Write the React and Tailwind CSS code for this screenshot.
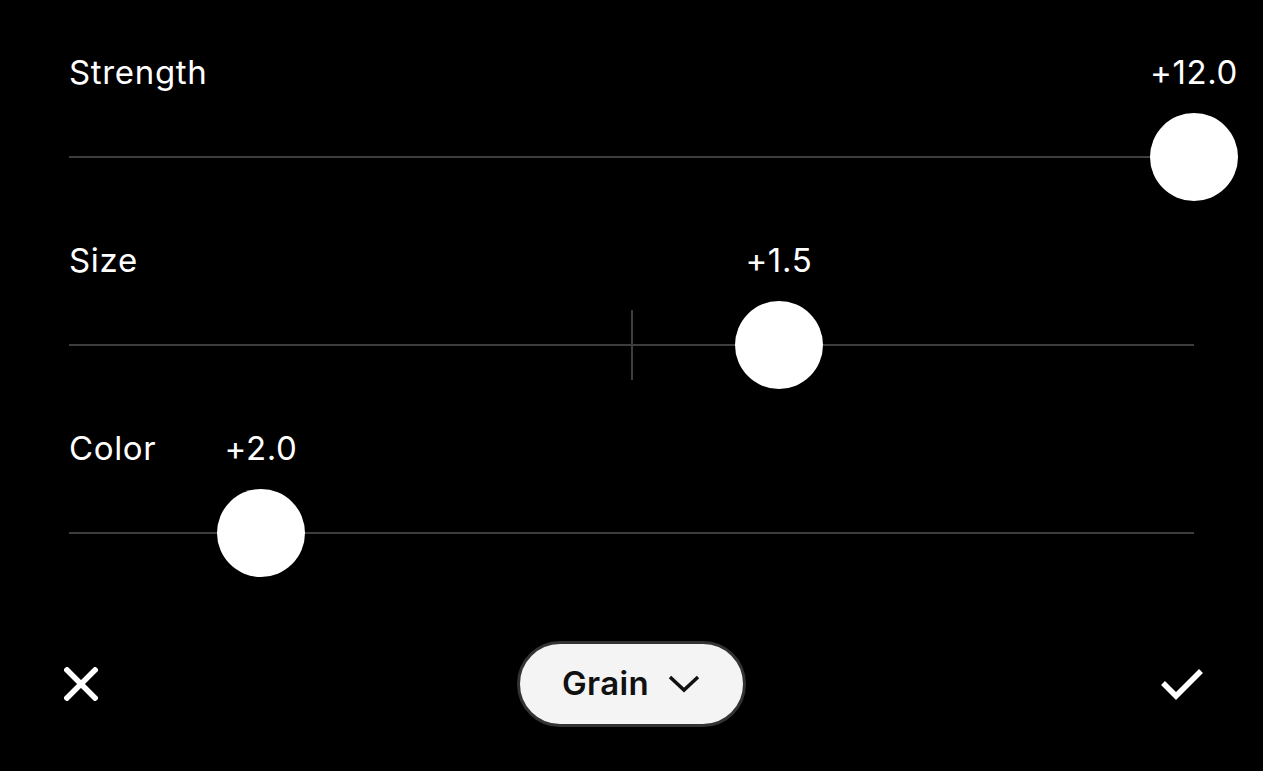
import React from 'react';

// Grain adjustment sheet: three sliders + bottom action bar

const sliders = [
  { label: 'Strength', value: '+12.0', pct: 100, center: false },
  { label: 'Size', value: '+1.5', pct: 63.1, center: true },
  { label: 'Color', value: '+2.0', pct: 17.07, center: false },
];

const SliderRow = ({ label, value, pct, center }) => (
  <div className="flex flex-col">
    <div className="relative h-[40px] text-[33px] leading-[40px] tracking-[0.02em] text-white">
      <span>{label}</span>
      <span
        className="absolute top-0 -translate-x-1/2 whitespace-nowrap"
        style={{ left: `${pct}%` }}
      >
        {value}
      </span>
    </div>
    <div className="relative mt-[21px] h-[88px] flex items-center">
      <div className="h-[2px] w-full bg-[#3d3d3d]" />
      {center && (
        <div className="absolute left-1/2 top-1/2 h-[70px] w-[2px] -translate-x-1/2 -translate-y-1/2 bg-[#3d3d3d]" />
      )}
      <div
        className="absolute top-0 h-[88px] w-[88px] -translate-x-1/2 rounded-full bg-white"
        style={{ left: `${pct}%` }}
      />
    </div>
  </div>
);

export default function App() {
  return (
    <div
      className="h-[771px] w-[1263px] overflow-hidden bg-black"
      style={{ fontFamily: 'Inter, "Liberation Sans", sans-serif' }}
    >
      <div className="flex flex-col gap-[39px] px-[69px] pt-[52px]">
        {sliders.map((s) => (
          <SliderRow key={s.label} {...s} />
        ))}
      </div>

      <div className="mt-[64px] grid grid-cols-[1fr_auto_1fr] items-center">
        <div className="pl-[64px]">
          <svg width="34" height="34" viewBox="0 0 34 34" fill="none">
            <path d="M3 3L31 31M31 3L3 31" stroke="white" strokeWidth="5.5" strokeLinecap="square" />
          </svg>
        </div>
        <button className="flex h-[86px] w-[229px] items-center justify-center gap-[18px] rounded-full border-[3px] border-[#333] bg-[#f4f4f4] text-[33px] font-semibold tracking-[0.01em] text-[#111]">
          <span>Grain</span>
          <svg width="34" height="20" viewBox="0 0 34 20" fill="none">
            <path d="M3 3L17 16L31 3" stroke="#111" strokeWidth="3.5" />
          </svg>
        </button>
        <div className="flex justify-end pr-[59px]">
          <svg width="44" height="34" viewBox="0 0 44 34" fill="none">
            <path d="M3 16L16 29L41 4" stroke="white" strokeWidth="5.5" />
          </svg>
        </div>
      </div>
    </div>
  );
}
